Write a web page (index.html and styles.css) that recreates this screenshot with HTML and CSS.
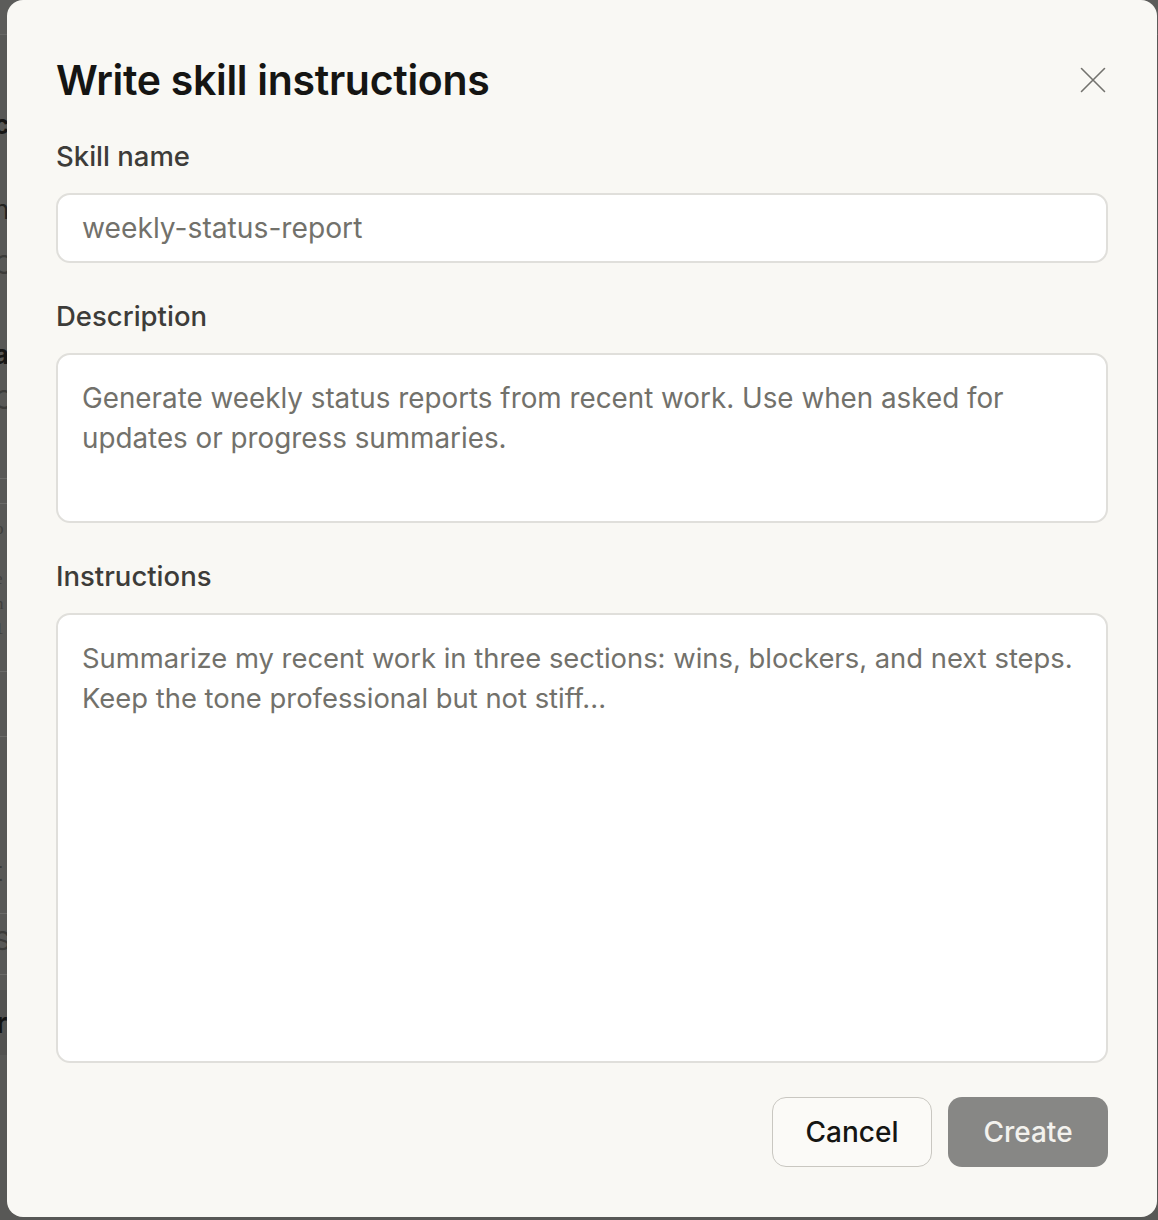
FILE: index.html
```html
<!DOCTYPE html>
<html lang="en">
<head>
<meta charset="utf-8">
<title>Write skill instructions</title>
<link rel="stylesheet" href="styles.css">
</head>
<body>
<div class="app">
  <div class="app-top"></div>
  <div class="app-col">
    <div class="frag frag-bold f1">c</div>
    <div class="frag f2">n</div>
    <div class="frag frag-muted f3">C</div>
    <div class="frag frag-bold f4">a</div>
    <div class="frag frag-muted f5">C</div>
    <div class="rule r1"></div>
    <div class="rule r2"></div>
    <div class="serif-list">
      <div>o</div><div>t</div><div>e</div><div>n</div><div>1</div>
    </div>
    <div class="rule r3"></div>
    <div class="rule r4"></div>
    <div class="frag f6">t</div>
    <div class="rule r5"></div>
    <div class="frag f7">S</div>
    <div class="rule r6"></div>
    <div class="dark-block"><span>r</span></div>
  </div>
</div>

<div class="overlay">
  <div class="modal" role="dialog" aria-labelledby="dlg-title">
    <div class="modal-head">
      <h1 id="dlg-title" class="modal-title">Write skill instructions</h1>
      <button class="close-btn" aria-label="Close">
        <svg width="28" height="28" viewBox="0 0 28 28" fill="none" stroke="currentColor" stroke-width="1.6" stroke-linecap="round">
          <path d="M2.5 2.5 L25.5 25.5 M25.5 2.5 L2.5 25.5"/>
        </svg>
      </button>
    </div>

    <div class="field">
      <label class="field-label">Skill name</label>
      <div class="input">weekly-status-report</div>
    </div>

    <div class="field">
      <label class="field-label">Description</label>
      <div class="textarea textarea-desc">Generate weekly status reports from recent work. Use when asked for<br>updates or progress summaries.</div>
    </div>

    <div class="field">
      <label class="field-label">Instructions</label>
      <div class="textarea textarea-instr">Summarize my recent work in three sections: wins, blockers, and next steps.<br>Keep the tone professional but not stiff...</div>
    </div>

    <div class="actions">
      <button class="btn btn-cancel">Cancel</button>
      <button class="btn btn-create">Create</button>
    </div>
  </div>
</div>
</body>
</html>
```

FILE: styles.css
```css
* { box-sizing: border-box; }

html, body {
  margin: 0;
  padding: 0;
  height: 100%;
}

body {
  background: #585856;
  font-family: Inter, "Noto Sans", "Liberation Sans", sans-serif;
  overflow: hidden;
}

/* underlying app, mostly hidden by the modal */
.app {
  height: 1220px;
  display: flex;
  flex-direction: column;
}
.app-top {
  height: 35px;
  background: #5c5c5a;
  border-bottom: 1px solid #676765;
  flex: none;
}
.app-col {
  display: flex;
  flex-direction: column;
  width: 60px;
}
.frag {
  font-family: Inter, sans-serif;
  font-size: 26px;
  line-height: 30px;
  color: #232321;
  margin-left: -6px;
}
.frag-bold { font-weight: 700; color: #161615; }
.frag-muted { color: #3b3b39; }
.f1 { margin-top: 75px; }
.f2 { margin-top: 55px; }
.f3 { margin-top: 25px; }
.f4 { margin-top: 60px; }
.f5 { margin-top: 15px; }
.rule { height: 1px; background: #6a6a68; }
.r1 { margin-top: 63px; }
.r2 { margin-top: 24px; }
.serif-list {
  margin-top: 12px;
  margin-left: -5px;
  font-family: "Liberation Serif", serif;
  font-size: 17px;
  line-height: 25px;
  color: #3e3e3c;
}
.r3 { margin-top: 30px; }
.r4 { margin-top: 64px; }
.f6 { margin-top: 120px; color: #3b3b39; }
.r5 { margin-top: 26px; }
.f7 { margin-top: 12px; color: #3b3b39; }
.r6 { margin-top: 18px; }
.dark-block {
  margin-top: 15px;
  height: 65px;
  background: #525250;
  display: flex;
  align-items: center;
}
.dark-block span {
  font-size: 28px;
  font-weight: 700;
  color: #121211;
  margin-left: -4px;
}

/* overlay + modal */
.overlay {
  position: fixed;
  inset: 0;
  padding: 0 1px 3px 7px;
  display: flex;
}
.modal {
  flex: 1;
  background: #f9f8f4;
  border-radius: 16px;
  padding: 56px 49px 50px 49px;
  display: flex;
  flex-direction: column;
}

.modal-head {
  display: flex;
  align-items: center;
  justify-content: space-between;
  height: 48px;
}
.modal-title {
  margin: 0;
  font-size: 41px;
  line-height: 48px;
  font-weight: 600;
  color: #151513;
  letter-spacing: -0.3px;
}
.close-btn {
  width: 40px;
  height: 40px;
  margin-right: -5px;
  padding: 0;
  border: 0;
  background: transparent;
  color: #73726e;
  display: flex;
  align-items: center;
  justify-content: center;
}

.field {
  display: flex;
  flex-direction: column;
  gap: 21px;
  margin-top: 36px;
}
.field + .field { margin-top: 37px; }

.field-label {
  font-size: 27.5px;
  line-height: 32px;
  font-weight: 500;
  color: #3d3c39;
}

.input, .textarea {
  background: #ffffff;
  border: 2px solid #e0dfdb;
  border-radius: 14px;
  color: #72716b;
  font-size: 27.8px;
  padding: 0 24px;
}
.input {
  height: 70px;
  display: flex;
  align-items: center;
  font-size: 28.2px;
}
.textarea {
  line-height: 40px;
  padding-top: 23px;
}
.textarea-desc { height: 170px; }
.textarea-instr { height: 450px; font-size: 27.4px; }

.actions {
  margin-top: 34px;
  display: flex;
  justify-content: flex-end;
  gap: 16px;
}
.btn {
  width: 160px;
  height: 70px;
  border-radius: 14px;
  font-family: inherit;
  font-size: 28px;
  font-weight: 500;
  padding: 0;
}
.btn-cancel {
  background: #fbfaf7;
  border: 1px solid #c9c7c1;
  color: #151513;
}
.btn-create {
  background: #878785;
  border: 0;
  color: #f3f2ee;
}
```
